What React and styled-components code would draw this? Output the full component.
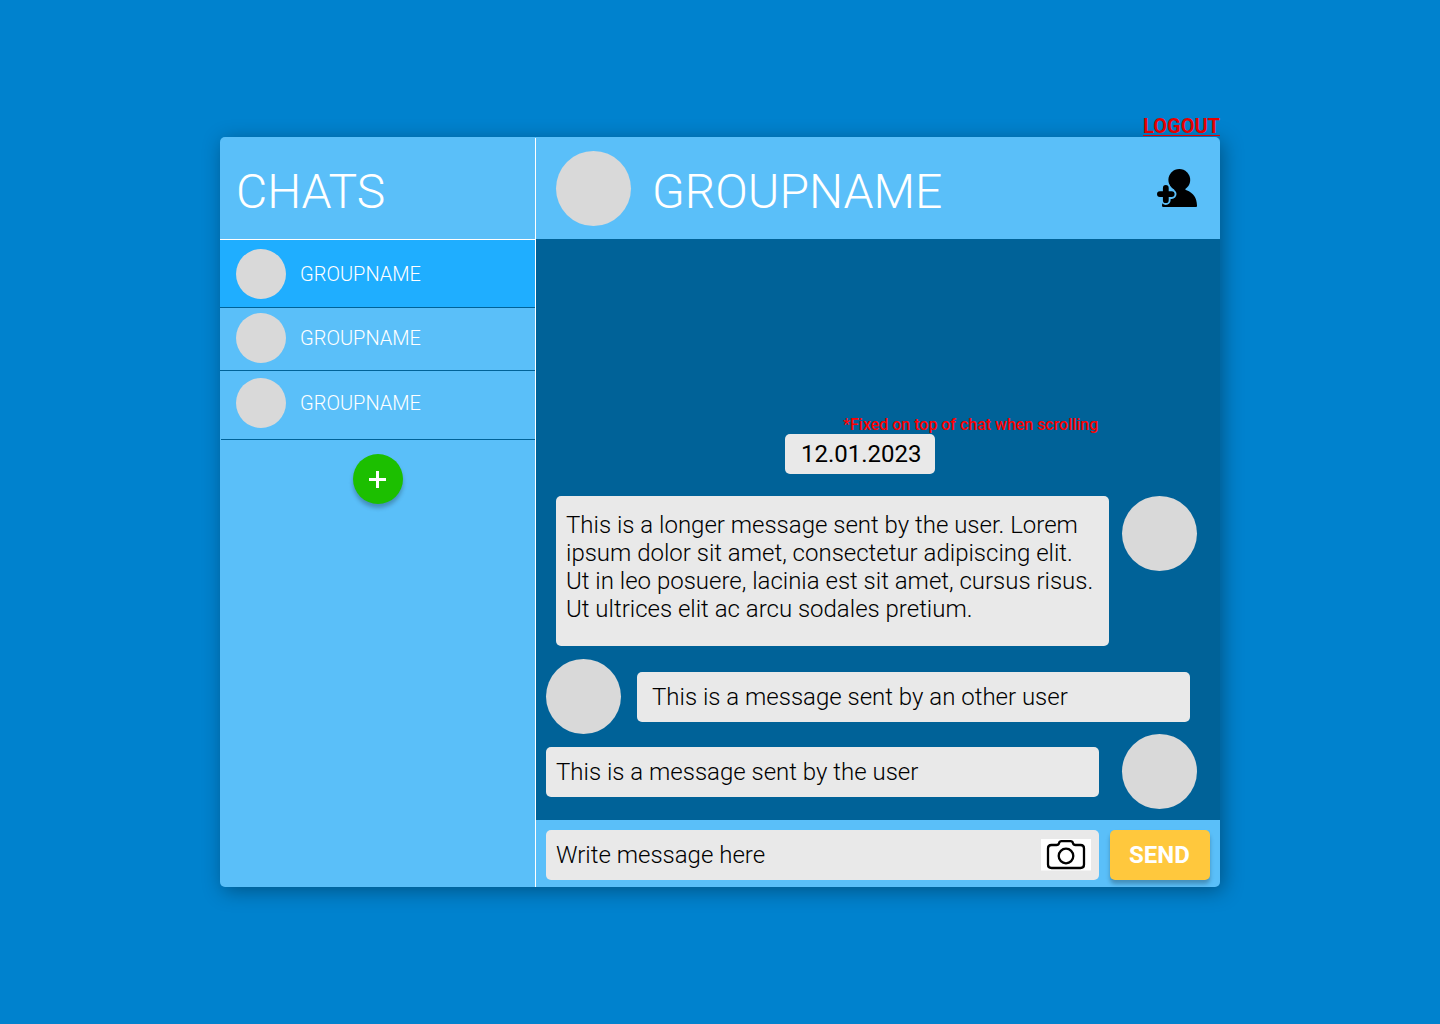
import React from "react";
import styled, { createGlobalStyle } from "styled-components";

const colors = {
  page: "#0082ce",
  panel: "#5abff9",
  active: "#1faeff",
  deep: "#006298",
  bubble: "#e9e9e9",
  avatar: "#d9d9d9",
  send: "#ffc83d",
  add: "#1cbf00",
};

const GlobalStyle = createGlobalStyle`
  *, *::before, *::after { box-sizing: border-box; }
  body {
    margin: 0;
    background: ${colors.page};
    font-family: Roboto, "Liberation Sans", sans-serif;
    font-weight: 300;
  }
  button { font-family: inherit; border: 0; padding: 0; cursor: pointer; }
`;

const Page = styled.div`
  width: 1000px;
  height: 1024px;
  margin: 0 auto;
  padding-top: 115px;
  display: flex;
  flex-direction: column;
`;

const Logout = styled.a`
  z-index: 1;
  align-self: flex-end;
  height: 21px;
  margin-bottom: 1px;
  border-bottom: 1px solid #e50000;
  font-size: 20px;
  line-height: 23px;
  font-weight: 700;
  color: #e50000;
`;

const Window = styled.main`
  display: flex;
  height: 750px;
  border-radius: 5px;
  overflow: hidden;
  background: ${colors.panel};
  box-shadow: 3px 4px 20px rgba(0, 0, 0, 0.35);
`;

const Sidebar = styled.aside`
  width: 315px;
  display: flex;
  flex-direction: column;
`;

const Divider = styled.div`
  width: 1px;
  margin-top: 1px;
  background: #fff;
`;

const SidebarHeader = styled.header`
  height: 103px;
  padding: 27px 16px 0;
  border-bottom: 1px solid #fff;
`;

const Title = styled.h1`
  margin: 0;
  font-size: 48px;
  line-height: 56px;
  font-weight: 300;
  color: #fff;
`;

const ChatRow = styled.div`
  display: flex;
  align-items: flex-start;
  gap: 14px;
  height: ${(p) => p.$height}px;
  padding: ${(p) => p.$top}px 16px 0;
  margin-left: ${(p) => p.$inset || 0}px;
  padding-left: ${(p) => 16 - (p.$inset || 0)}px;
  background: ${(p) => (p.$active ? colors.active : "transparent")};
  border-bottom: 1px solid ${colors.deep};
`;

const Avatar = styled.div`
  flex: none;
  width: ${(p) => p.$size}px;
  height: ${(p) => p.$size}px;
  border-radius: 50%;
  background: ${colors.avatar};
`;

const ChatName = styled.span`
  font-size: 20px;
  line-height: 50px;
  color: #fff;
`;

const AddButton = styled.button`
  align-self: center;
  display: grid;
  place-items: center;
  width: 50px;
  height: 50px;
  margin-top: 14px;
  border-radius: 50%;
  background: ${colors.add};
  box-shadow: 0 4px 4px rgba(0, 0, 0, 0.25);
`;

const Chat = styled.section`
  flex: 1;
  display: flex;
  flex-direction: column;
`;

const ChatHeader = styled.header`
  display: flex;
  align-items: flex-start;
  height: 102px;
  padding: 14px 23px 0 20px;
`;

const GroupTitle = styled(Title)`
  flex: 1;
  margin: 13px 0 0 21px;
`;

const InviteIcon = styled.svg`
  margin-top: 18px;
`;

const Messages = styled.div`
  height: 581px;
  padding: 176px 23px 0 10px;
  display: flex;
  flex-direction: column;
  background: ${colors.deep};
`;

const Note = styled.p`
  margin: 0 0 0 297px;
  height: 19px;
  font-size: 16px;
  line-height: 19px;
  font-weight: 500;
  letter-spacing: -0.02px;
  white-space: nowrap;
  color: #f00;
`;

const DateChip = styled.div`
  width: 150px;
  height: 40px;
  margin: 0 0 22px 239px;
  padding-left: 16px;
  border-radius: 5px;
  background: ${colors.bubble};
  font-size: 24px;
  line-height: 40px;
  font-weight: 400;
`;

const MessageRow = styled.div`
  display: flex;
  align-items: ${(p) => (p.$long ? "flex-start" : "center")};
  justify-content: space-between;
  padding: 0 ${(p) => (p.$other ? 7 : 0)}px 0 ${(p) => (p.$long ? 10 : 0)}px;
  margin-bottom: ${(p) => (p.$long ? 13 : 0)}px;
`;

const Bubble = styled.div`
  width: 553px;
  height: ${(p) => (p.$long ? 150 : 50)}px;
  padding: ${(p) => (p.$long ? 15 : 11)}px 10px 0 ${(p) => (p.$other ? 15 : 10)}px;
  border-radius: 5px;
  background: ${colors.bubble};
  font-size: 24px;
  line-height: 28px;
  color: #000;
`;

const Composer = styled.footer`
  display: flex;
  align-items: flex-start;
  gap: 11px;
  height: 67px;
  padding: 10px;
`;

const Field = styled.div`
  display: flex;
  align-items: flex-start;
  justify-content: space-between;
  width: 553px;
  height: 50px;
  padding: 9px 8px 0 10px;
  border-radius: 5px;
  background: ${colors.bubble};
  font-size: 24px;
  line-height: 32px;
`;

const SendButton = styled.button`
  width: 100px;
  height: 50px;
  padding-right: 1px;
  border-radius: 5px;
  background: ${colors.send};
  box-shadow: 0 4px 4px rgba(0, 0, 0, 0.25);
  font-size: 24px;
  font-weight: 700;
  color: #fff;
`;

const plusPath = "M8.8 19v12.200M2.900 25.100H14.700";

function AddPerson() {
  return (
    <InviteIcon width="40" height="38" viewBox="0 0 40 38" fill="none" strokeLinecap="round">
      <circle cx="22.300" cy="10.900" r="10.900" fill="#000" />
      <path
        d="M16.500 17h11c-.5 2 .2 3.400 2 4.300C36.500 24 39.800 29 40 36.500c0 1-.3 1.500-1.300 1.500H7c-1.500 0-2-.5-2-1.500.1-1.200.3-2.200.6-3.200L17.500 20.500z"
        fill="#000"
      />
      <path d={plusPath} stroke={colors.panel} strokeWidth="9.600" />
      <path d={plusPath} stroke="#000" strokeWidth="5.800" />
    </InviteIcon>
  );
}

function Camera() {
  return (
    <svg width="50" height="32" viewBox="0 0 50 32" fill="none" stroke="#000" strokeWidth="2.3">
      <path d="M0 0h50v31.500H0z" fill="#fff" stroke="none" />
      <path d="M10.500 6h5c1.500 0 2.300-.6 2.600-2 .3-1.300 1-1.900 2.400-1.900h9c1.400 0 2.100.6 2.400 1.900.3 1.400 1.100 2 2.600 2h5c2.300 0 3.500 1.200 3.500 3.500v16c0 2.300-1.200 3.500-3.500 3.500h-29C8.200 29 7 27.800 7 25.500v-16C7 7.200 8.200 6 10.500 6z" />
      <circle cx="25" cy="17" r="7.300" />
    </svg>
  );
}

const chats = [
  { name: "GROUPNAME", active: true, height: 68, top: 9 },
  { name: "GROUPNAME", height: 63, top: 5 },
  { name: "GROUPNAME", height: 69, top: 7, inset: 1 },
];

export default function App() {
  return (
    <>
      <GlobalStyle />
      <Page>
        <Logout>LOGOUT</Logout>
        <Window>
          <Sidebar>
            <SidebarHeader>
              <Title>CHATS</Title>
            </SidebarHeader>
            {chats.map((c, i) => (
              <ChatRow key={i} $active={c.active} $height={c.height} $top={c.top} $inset={c.inset}>
                <Avatar $size={50} />
                <ChatName>{c.name}</ChatName>
              </ChatRow>
            ))}
            <AddButton aria-label="Add chat">
              <svg width="18" height="18" viewBox="0 0 18 18" stroke="#fff" strokeWidth="3">
                <path d="M8.500 1v17.500M0 9.500h17" />
              </svg>
            </AddButton>
          </Sidebar>
          <Divider />
          <Chat>
            <ChatHeader>
              <Avatar $size={75} />
              <GroupTitle as="h2">GROUPNAME</GroupTitle>
              <AddPerson />
            </ChatHeader>
            <Messages>
              <Note>*Fixed on top of chat when scrolling</Note>
              <DateChip>12.01.2023</DateChip>
              <MessageRow $long>
                <Bubble $long>
                  This is a longer message sent by the user. Lorem ipsum dolor sit amet, consectetur
                  adipiscing elit. Ut in leo posuere, lacinia est sit amet, cursus risus. Ut ultrices
                  elit ac arcu sodales pretium.
                </Bubble>
                <Avatar $size={75} />
              </MessageRow>
              <MessageRow $other>
                <Avatar $size={75} />
                <Bubble $other>This is a message sent by an other user</Bubble>
              </MessageRow>
              <MessageRow>
                <Bubble>This is a message sent by the user</Bubble>
                <Avatar $size={75} />
              </MessageRow>
            </Messages>
            <Composer>
              <Field>
                <span>Write message here</span>
                <Camera />
              </Field>
              <SendButton>SEND</SendButton>
            </Composer>
          </Chat>
        </Window>
      </Page>
    </>
  );
}
